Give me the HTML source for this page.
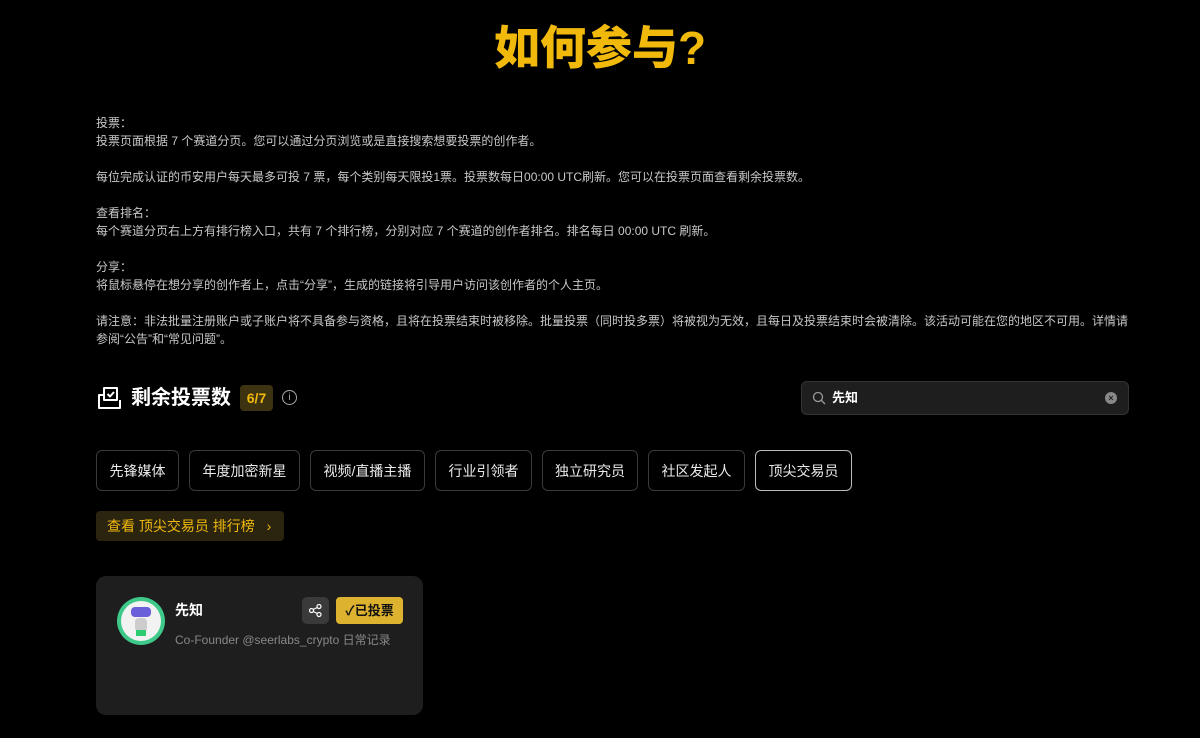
<!DOCTYPE html>
<html><head><meta charset="utf-8"><style>
*{margin:0;padding:0;box-sizing:border-box}
body{width:1200px;height:738px;background:#000;color:#fff;font-family:"Liberation Sans","Noto Sans CJK SC",sans-serif;position:relative;overflow:hidden}
.abs{position:absolute}
h1{position:absolute;top:18px;left:0;width:1200px;text-align:center;font-size:46px;font-weight:900;color:#F0B90B;line-height:60px}
.txt{left:96px;top:114px;width:1040px;font-size:12px;line-height:18px;color:#c8c8c8}
.tab{position:absolute;top:450px;height:41px;border:1px solid #3a3a3a;border-radius:6px;font-size:14px;display:flex;align-items:center;justify-content:center;color:#eaeaea}
</style></head><body>
<h1>如何参与?</h1>
<div class="abs txt">投票：<br>投票页面根据 7 个赛道分页。您可以通过分页浏览或是直接搜索想要投票的创作者。<br><br>每位完成认证的币安用户每天最多可投 7 票，每个类别每天限投1票。投票数每日00:00 UTC刷新。您可以在投票页面查看剩余投票数。<br><br>查看排名：<br>每个赛道分页右上方有排行榜入口，共有 7 个排行榜，分别对应 7 个赛道的创作者排名。排名每日 00:00 UTC 刷新。<br><br>分享：<br>将鼠标悬停在想分享的创作者上，点击“分享”，生成的链接将引导用户访问该创作者的个人主页。<br><br>请注意：非法批量注册账户或子账户将不具备参与资格，且将在投票结束时被移除。批量投票（同时投多票）将被视为无效，且每日及投票结束时会被清除。该活动可能在您的地区不可用。详情请参阅“公告”和“常见问题”。</div>
<svg class="abs" style="left:97px;top:385px" width="26" height="26" viewBox="0 0 26 26" fill="none" stroke="#fff" stroke-width="2" stroke-linejoin="round"><path d="M7 3h13v12H7z"/><path d="M10.5 9l2.5 2.5L17 7"/><path d="M7 10H2v13h21V15"/></svg>
<div class="abs" style="left:131px;top:384px;font-size:20px;font-weight:700;line-height:28px">剩余投票数</div>
<div class="abs" style="left:240px;top:385px;width:33px;height:26px;background:#3d3310;border-radius:4px;color:#F0B90B;font-size:14px;font-weight:700;text-align:center;line-height:26px">6/7</div>
<div class="abs" style="left:282px;top:390px;width:15px;height:15px;border:1.3px solid #aaa;border-radius:50%;color:#aaa;font-size:10px;text-align:center;line-height:13px">i</div>
<div class="abs" style="left:801px;top:381px;width:328px;height:34px;background:#1e1e1e;border:1px solid #333;border-radius:6px"></div>
<svg class="abs" style="left:812px;top:391px" width="14" height="14" viewBox="0 0 14 14" fill="none" stroke="#999" stroke-width="1.3"><circle cx="6" cy="6" r="4.5"/><path d="M9.5 9.5L13 13"/></svg>
<div class="abs" style="left:832px;top:389px;font-size:13px;font-weight:700;line-height:18px">先知</div>
<div class="abs" style="left:1105px;top:392px;width:12px;height:12px;border-radius:50%;background:#888;color:#222;font-size:9px;text-align:center;line-height:12px;font-weight:700">×</div>
<div class="tab" style="left:96px;width:83px">先锋媒体</div>
<div class="tab" style="left:189px;width:111px">年度加密新星</div>
<div class="tab" style="left:310px;width:115px">视频/直播主播</div>
<div class="tab" style="left:435px;width:97px">行业引领者</div>
<div class="tab" style="left:542px;width:96px">独立研究员</div>
<div class="tab" style="left:648px;width:97px">社区发起人</div>
<div class="tab" style="left:755px;width:97px;border-color:#bbb">顶尖交易员</div>
<div class="abs" style="left:96px;top:511px;width:188px;height:30px;background:#2b2510;border-radius:4px;color:#F0B90B;font-size:14px;line-height:30px;padding-left:11px">查看 顶尖交易员 排行榜 <span style="margin-left:8px">›</span></div>
<div class="abs" style="left:96px;top:576px;width:327px;height:139px;background:#1e1e1e;border-radius:10px"></div>
<div class="abs" style="left:117px;top:597px;width:48px;height:48px;border-radius:50%;background:#3ec98a"></div>
<div class="abs" style="left:121px;top:601px;width:40px;height:40px;border-radius:50%;background:#f2f2f2"></div>
<div class="abs" style="left:131px;top:607px;width:20px;height:10px;border-radius:4px;background:#6a5fd8"></div>
<div class="abs" style="left:135px;top:618px;width:12px;height:14px;border-radius:4px;background:#ccc"></div>
<div class="abs" style="left:136px;top:630px;width:10px;height:6px;background:#2ecc71"></div>
<div class="abs" style="left:175px;top:600px;font-size:14px;font-weight:700;line-height:20px">先知</div>
<div class="abs" style="left:175px;top:631px;font-size:12px;color:#888;line-height:18px">Co-Founder @seerlabs_crypto 日常记录</div>
<div class="abs" style="left:302px;top:597px;width:27px;height:27px;background:#3a3a3a;border-radius:5px"></div>
<svg class="abs" style="left:308px;top:603px" width="15" height="15" viewBox="0 0 15 15" fill="none" stroke="#fff" stroke-width="1.2"><circle cx="11" cy="3.5" r="2"/><circle cx="3.5" cy="7.5" r="2"/><circle cx="11" cy="11.5" r="2"/><path d="M5.3 6.5L9.2 4.5M5.3 8.5L9.2 10.5"/></svg>
<div class="abs" style="left:336px;top:597px;width:67px;height:27px;background:#dcb22e;border-radius:4px;color:#111;font-size:13px;font-weight:700;line-height:27px;text-align:center">✓已投票</div>
</body></html>
